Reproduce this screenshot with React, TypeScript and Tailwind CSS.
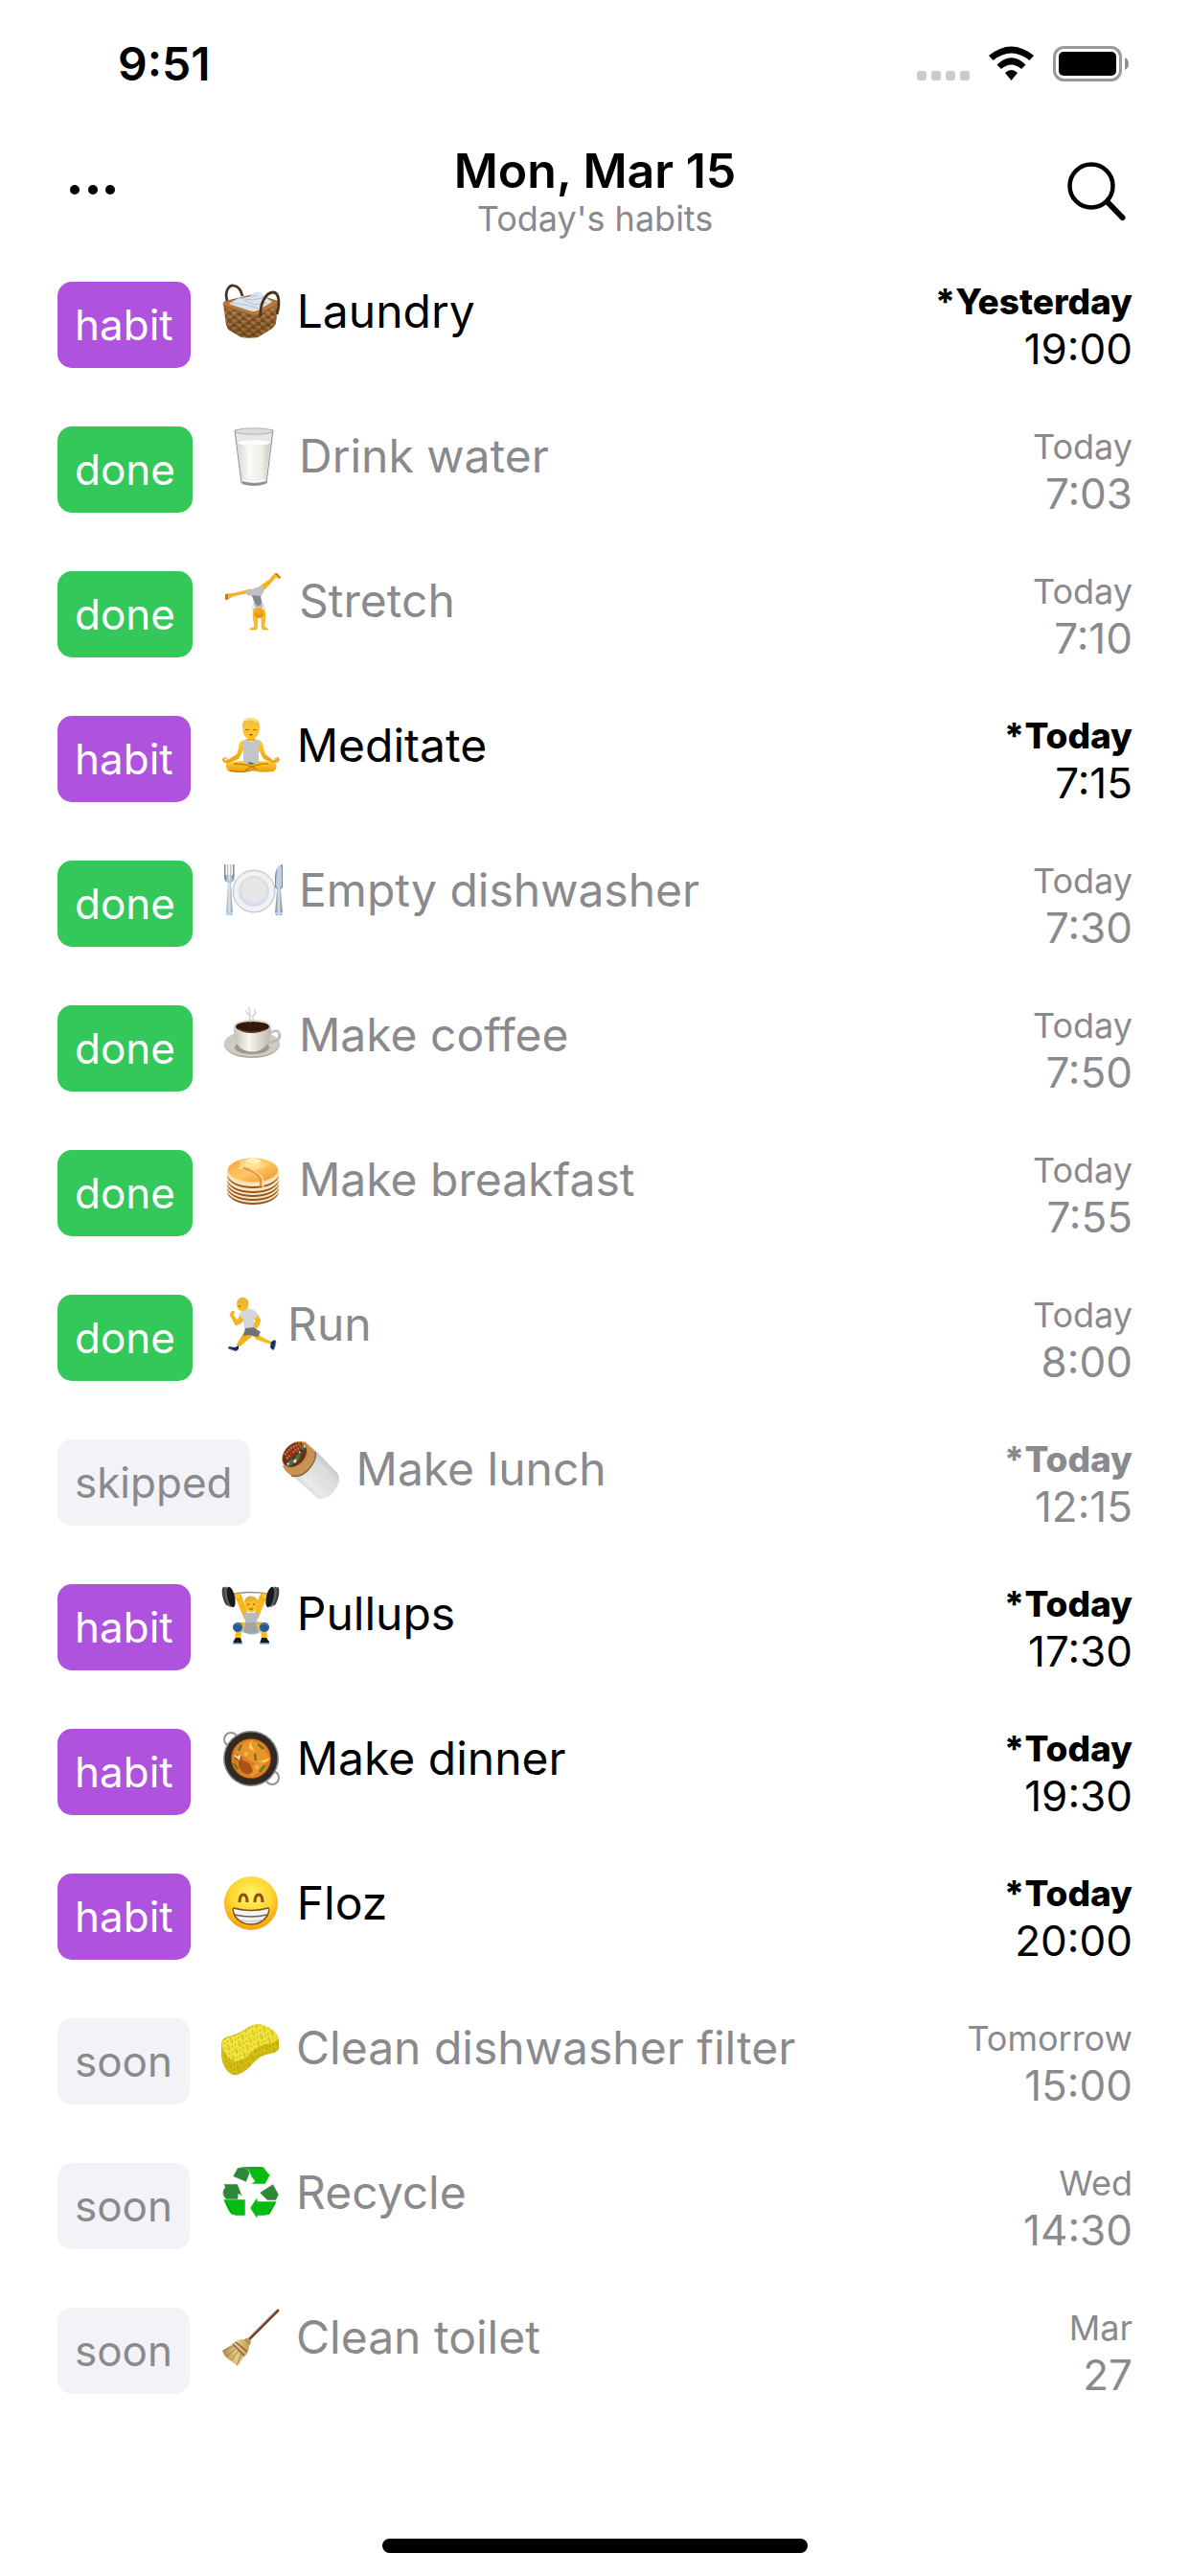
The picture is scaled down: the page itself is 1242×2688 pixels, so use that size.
import React from "react";

type Status = "habit" | "done" | "skipped" | "soon";

type Habit = {
  status: Status;
  icon: () => React.ReactElement;
  name: string;
  day: string;
  time: string;
  tight?: boolean;
};

function Emoji({ label, children }: { label: string; children: React.ReactNode }) {
  return (
    <svg role="img" aria-label={label} viewBox="0 0 60 60" className="size-[60px] shrink-0 overflow-visible">
      {children}
    </svg>
  );
}

const Basket = () => (
  <Emoji label="Laundry basket">
    <defs>
      <linearGradient id="basket" x1="0" y1="0" x2="0" y2="1">
        <stop offset="0" stopColor="#b98347" />
        <stop offset="1" stopColor="#7d5228" />
      </linearGradient>
      <pattern id="weave" width="10" height="8" patternUnits="userSpaceOnUse" patternTransform="skewY(6)">
        <rect width="5" height="4" fill="#5b3817" opacity=".55" />
        <rect x="5" y="4" width="5" height="4" fill="#5b3817" opacity=".55" />
        <path d="M5 1h5M0 5h5" stroke="#d19b58" strokeWidth="1" opacity=".7" />
      </pattern>
    </defs>
    <path d="M5 18C2 6 8 1 12 2c5 1 8 6 9 11" fill="none" stroke="#4a3420" strokeWidth="2.8" />
    <path d="M1 22 34 12 58 20 56 41Q55 45 50 48L37 56Q27 57 20 56L8 49Q5 47 4 43Z" fill="url(#basket)" />
    <path d="M2 25 36 34 58 23 56 41Q55 45 50 48L37 56Q27 57 20 56L8 49Q5 47 4 43Z" fill="url(#weave)" />
    <path d="M1 21Q1 19 5 18L34 11 57 18Q59 20 57 22L38 32Q35 34 31 33L4 24Q1 23 1 21Z" fill="#b57a3c" stroke="#80532a" strokeWidth=".8" />
    <path d="M7 21 17 15 27 14 34 9Q38 8 41 10L45 14 52 19 37 28Q33 30 28 28Z" fill="#dbe4ec" />
    <path d="M17 15 31 17 45 14M27 14 36 12M10 20 25 22 38 26M23 17 33 22 47 20" fill="none" stroke="#b3c0cd" strokeWidth="1" />
    <path d="M40 34C39 20 46 9 53 9 60 9 60 22 57 32" fill="none" stroke="#4a3420" strokeWidth="2.8" />
  </Emoji>
);

const Milk = () => (
  <Emoji label="Glass of milk">
    <defs>
      <linearGradient id="milk" x1="0" x2="1">
        <stop offset="0" stopColor="#d8d6cf" />
        <stop offset=".35" stopColor="#fbfaf6" />
        <stop offset=".75" stopColor="#efede6" />
        <stop offset="1" stopColor="#c9c7c0" />
      </linearGradient>
    </defs>
    <path d="M11 2 18 57Q31 62 44 57L51 2Z" fill="#e6e7e8" stroke="#8c8e90" strokeWidth="1" />
    <path d="M14 15 19 52Q31 56 43 52L48 15Z" fill="url(#milk)" />
    <ellipse cx="31" cy="15" rx="17" ry="2.8" fill="#fdfcf8" />
    <ellipse cx="31" cy="3" rx="20" ry="3.2" fill="#dadcdd" stroke="#a3a5a7" strokeWidth=".8" />
    <path d="M19 55Q31 59 44 55L43 58Q31 61 19 58Z" fill="#8f9191" />
    <path d="M20 54Q31 57 42 54" fill="none" stroke="#fff" strokeWidth="1.4" />
  </Emoji>
);

const Cartwheel = () => (
  <Emoji label="Person cartwheeling">
    <path d="M28 20 9 24 3 28 1 27 2 22 11 21 27 17Z" fill="#f7b416" stroke="#e3950d" strokeWidth=".5" />
    <path d="M37 14 47 7 53 0 55 1 59 5 57 6 54 4 48 11 40 19Z" fill="#f7b416" stroke="#e3950d" strokeWidth=".5" />
    <path d="M1 22 1 28 4 27 4 22ZM53 1 58 5 59 4 55 0Z" fill="#c97a10" />
    <path d="M31 34 30 45 32 56 27 58 27 59 34 59 35 44ZM38 36 39 45 39 56 40 59 46 59 45 58 42 56 43 43 41 35Z" fill="#f9bd20" stroke="#e3950d" strokeWidth=".5" />
    <path d="M22 19 34 15 39 13 42 18 38 25 41 34 42 38 38 38 36 35 33 38 29 37 31 31 29 24 24 23Z" fill="#bfc0c4" />
    <path d="M29 23 38 24 39 32 35 35 32 31Z" fill="#85868c" />
    <path d="M29 36 31 32 33 38ZM41 33 43 37 39 38Z" fill="#f3f3f5" stroke="#d5d5d9" strokeWidth=".5" />
    <circle cx="36" cy="41" r="5" fill="#f2a81a" />
    <path d="M31 41Q36 45 41 41 41 47 36 47 32 46 31 41Z" fill="#dd9411" />
  </Emoji>
);

const Lotus = () => (
  <Emoji label="Person in lotus position">
    <defs>
      <linearGradient id="skin" x1="0" y1="0" x2="0" y2="1">
        <stop offset="0" stopColor="#ffd02e" />
        <stop offset="1" stopColor="#eb9d11" />
      </linearGradient>
    </defs>
    <path d="M26 18H34V24H26Z" fill="#eaa41a" />
    <path d="M22 23Q17 25 17 32L15 38 4 45 1 42 0 44 5 48 17 43 23 32ZM38 23Q43 25 43 32L45 38 54 45 59 41 59 44 54 48 43 43 37 32Z" fill="url(#skin)" />
    <path d="M4 48Q18 43 30 46 43 43 56 48 58 53 53 56 42 58 30 55 17 58 7 56 3 53 4 48Z" fill="url(#skin)" />
    <path d="M12 48Q29 48 36 54M48 48Q36 47 24 55M8 55Q24 58 33 54" fill="none" stroke="#c77c0b" strokeWidth="1.3" />
    <path d="M22 24 25 22Q30 28 35 22L39 24 38 34V47Q30 50 22 47V34Z" fill="#c4c5c9" />
    <path d="M26 47Q30 45 34 48L30 49Z" fill="#606a74" />
    <ellipse cx="30" cy="12" rx="8.7" ry="10.5" fill="#ffc52a" />
    <path d="M21 12V6Q24-1 31 0 40 1 39 12L37 8Q29 9 25 6Z" fill="#f4be42" />
    <path d="M24 3Q30-1 36 4" fill="none" stroke="#ffe494" strokeWidth="2" />
    <path d="M24 12Q26 14 28 12M32 12Q34 14 36 12" fill="none" stroke="#945e12" strokeWidth="1" />
    <path d="M28 17H32Q30 20 28 17Z" fill="#8f3e17" />
    <circle cx="3" cy="44" r="2.3" fill="none" stroke="#e09812" />
    <circle cx="57" cy="44" r="2.3" fill="none" stroke="#e09812" />
  </Emoji>
);

const Plate = () => (
  <Emoji label="Fork and knife with plate">
    <defs>
      <linearGradient id="steel" x1="0" x2="1">
        <stop offset="0" stopColor="#707780" />
        <stop offset=".5" stopColor="#d9e5f1" />
        <stop offset="1" stopColor="#707780" />
      </linearGradient>
    </defs>
    <circle cx="31" cy="30" r="22" fill="#ececee" stroke="#aebfd3" strokeWidth="1" />
    <circle cx="31" cy="30" r="20" fill="#f2f2f3" />
    <circle cx="31" cy="30" r="15.5" fill="#e0e1e3" stroke="#d6d9dd" strokeWidth="1" />
    <path d="M17 35A15 15 0 0 0 45 35" fill="none" stroke="#c8dcf5" strokeWidth="1.6" />
    <circle cx="31" cy="29" r="12.5" fill="#e6e6e7" />
    <path d="M0 2H1.5V13H3V2H4.5V13H6V2H7.5V13H9V2H10.5V16Q10 20 7 21L9 54Q6 57 2 54L4 21Q0 20 0 16Z" fill="url(#steel)" />
    <path d="M0 16Q5 22 10 16L7 21H4Z" fill="#a9c8ed" />
    <path d="M61 2Q53 3 53 17V26L55 28 53 54Q57 57 61 54L59 28 61 26Z" fill="url(#steel)" />
    <path d="M60 4Q54 6 54 25H60Z" fill="#bdd0e4" />
    <path d="M2 53H9M53 53H61" stroke="#b8d5f7" strokeWidth="2" />
  </Emoji>
);

const Coffee = () => (
  <Emoji label="Hot coffee">
    <defs>
      <linearGradient id="cup" x1="0" x2="1">
        <stop offset="0" stopColor="#c3bfb7" />
        <stop offset=".4" stopColor="#f8f6f1" />
        <stop offset="1" stopColor="#bbb6ad" />
      </linearGradient>
    </defs>
    <ellipse cx="29" cy="39" rx="29" ry="14" fill="#aaa59c" />
    <ellipse cx="29" cy="38" rx="29" ry="13.5" fill="#cfcbc3" />
    <ellipse cx="29" cy="42" rx="18" ry="7" fill="#9d978c" />
    <path d="M47 27Q57 21 58 29 58 36 45 37" fill="none" stroke="#c0bbb2" strokeWidth="3" />
    <path d="M47 26Q57 20 59 28" fill="none" stroke="#efede7" strokeWidth="1" />
    <path d="M10 20Q10 39 19 44 29 49 39 44 49 38 49 20Z" fill="url(#cup)" />
    <ellipse cx="29.5" cy="20" rx="19.5" ry="7" fill="#dcd8d0" />
    <ellipse cx="29.5" cy="20.5" rx="17.5" ry="5.5" fill="#34190e" />
    <path d="M14 22Q29 29 45 22 39 27 29 27 19 27 14 22Z" fill="#6d3c20" />
    <path d="M28 16Q25 12 28 9 23 7 23 3M26 8Q28 4 25 0M31 15Q28 9 33 6L31 2" fill="none" stroke="#b5b5b5" strokeWidth="1.5" opacity=".6" />
  </Emoji>
);

const Pancakes = () => (
  <Emoji label="Pancakes">
    <defs>
      <linearGradient id="cake" x1="0" y1="0" x2="1" y2="1">
        <stop offset="0" stopColor="#eda23a" />
        <stop offset=".5" stopColor="#ffc762" />
        <stop offset="1" stopColor="#e8912e" />
      </linearGradient>
    </defs>
    {[40, 36, 32, 28, 23].map((y) => (
      <g key={y}>
        <ellipse cx="30" cy={y + 1} rx="27" ry="14" fill="#96551d" />
        <ellipse cx="30" cy={y - 1} rx="27.5" ry="14" fill="#f9e5c1" />
      </g>
    ))}
    <ellipse cx="30" cy="20" rx="27" ry="13.5" fill="#f9dfaf" />
    <ellipse cx="30" cy="19" rx="26" ry="12.5" fill="url(#cake)" />
    <path d="M16 10Q25 5 35 7L45 13Q37 20 30 18L40 25Q42 31 42 37 38 39 39 29L24 20 14 18Q18 15 16 10Z" fill="#ffd98e" opacity=".85" />
    <path d="M20 17Q32 20 38 28V36" fill="none" stroke="#e58d48" strokeWidth="2" />
    <path d="M22 9 29 6 39 9 37 15 31 18 21 14Z" fill="#ffe391" />
    <path d="M22 9 29 6 39 9 32 13Z" fill="#fff2bc" />
  </Emoji>
);

const Runner = () => (
  <Emoji label="Person running">
    <path d="M27 32 20 38 13 50 15 53 25 45 34 37Z" fill="#f6b016" />
    <path d="M32 35 39 42 49 47 49 50 34 45 27 38Z" fill="#f9bc1f" />
    <path d="M18 16 14 25 9 19 11 16 8 15 6 19 12 30 17 28 23 22ZM33 16 38 25 34 33 30 31 33 25 28 18Z" fill="#f8b719" stroke="#df930e" strokeWidth=".5" />
    <path d="M18 14 25 12Q33 13 35 20L31 24V34Q26 38 21 34L20 24 16 20Z" fill="#d5d6da" />
    <path d="M22 33 31 32 38 37 35 42 26 40 20 41Z" fill="#707176" />
    <path d="M31 31Q29 28 33 27L37 29 35 32Z" fill="#f8b719" />
    <ellipse cx="19" cy="9" rx="6" ry="6" fill="#fbbd20" />
    <path d="M13 6Q15 0 21 1 27 3 25 10L22 12 20 7 14 7Z" fill="#e9b437" />
    <path d="M15 10H17" stroke="#77440d" strokeWidth="1.2" />
    <path d="M5 52 11 53 15 51 15 55 12 57 4 54ZM49 47 53 45 54 47 53 53 51 56 48 53Z" fill="#172d62" />
    <path d="M4 54 13 57M54 47 52 55" stroke="#7186a8" strokeWidth=".8" />
  </Emoji>
);

const Burrito = () => (
  <Emoji label="Burrito">
    <defs>
      <linearGradient id="foil" x1="0" y1="1" x2="1" y2="0">
        <stop offset="0" stopColor="#b5b6b8" />
        <stop offset=".35" stopColor="#e9e9ea" />
        <stop offset=".65" stopColor="#d9dadb" />
        <stop offset="1" stopColor="#a4a5a7" />
      </linearGradient>
    </defs>
    <path d="M11 36 37 11 58 33Q62 39 58 47 51 60 41 60 37 60 34 56Z" fill="url(#foil)" />
    <path d="M1 26Q6 35 13 37 22 39 30 27 38 17 36 11L24 0Z" fill="#c99155" />
    <path d="M10 36Q22 38 30 27 37 18 35 11" fill="none" stroke="#8f6a41" strokeWidth="1.4" />
    <ellipse cx="14" cy="14" rx="16" ry="11.5" transform="rotate(-48 14 14)" fill="#c68a49" />
    <ellipse cx="13.5" cy="14" rx="14.5" ry="10.5" transform="rotate(-48 13.5 14)" fill="#652e1d" />
    <path d="M3 14 10 7 20 2M5 18 15 9 23 4" fill="none" stroke="#d76830" strokeWidth="3" strokeDasharray="2 1" />
    <path d="M6 21 11 18 13 22 9 26ZM15 14 20 12 18 20 14 18ZM19 5 24 5 22 10Z" fill="#3c7d30" />
    <path d="M12 20 15 18 16 21 13 23ZM17 11 19 10 20 13ZM5 23 8 22 7 26ZM23 3 25 6 23 7Z" fill="#d8dce5" />
    <circle cx="11" cy="14" r="2" fill="#9c2618" />
    <path d="M21 36 43 57M29 36 32 40 30 43M39 25 47 30 44 35M50 40 44 43" fill="none" stroke="#fff" opacity=".4" />
  </Emoji>
);

const Lifter = () => (
  <Emoji label="Person lifting weights">
    <path d="M8 9Q30 4 52 9" fill="none" stroke="#8c9095" strokeWidth="1.5" />
    <path d="M14 9 18 7 21 12 26 27 23 35 15 15ZM45 9 41 7 38 12 34 27 37 35 45 15Z" fill="#f8b81a" />
    <path d="M13 8 17 7 20 11 16 15 13 12ZM42 7 46 8 47 12 43 15 40 11Z" fill="#fbc52d" stroke="#d28b12" strokeWidth=".7" />
    <g transform="rotate(-13 7 11)">
      <ellipse cx="3.5" cy="10" rx="3" ry="10" fill="#3b3d42" />
      <ellipse cx="6" cy="11" rx="3.2" ry="11" fill="#5a5d63" />
      <ellipse cx="9" cy="12" rx="3.8" ry="11" fill="#17191c" />
    </g>
    <g transform="rotate(13 52 11)">
      <ellipse cx="55.5" cy="10" rx="3" ry="10" fill="#3b3d42" />
      <ellipse cx="53" cy="11" rx="3.2" ry="11" fill="#5a5d63" />
      <ellipse cx="50" cy="12" rx="3.8" ry="11" fill="#17191c" />
    </g>
    <path d="M15 42H21L19 55H13ZM40 42H46L47 55H41Z" fill="#f9ba1c" />
    <path d="M22 26 27 28 33 28 38 26 36 37 43 38 44 46 36 50Q30 52 24 49L17 47 17 38 24 38Z" fill="#b9babe" />
    <path d="M25 38 22 48Q30 51 37 48L35 38Z" fill="#a3a4a8" />
    <path d="M13 40Q18 36 24 39L23 44ZM47 40Q42 36 36 39L37 44Z" fill="#f8b81a" />
    <ellipse cx="30" cy="19" rx="6.5" ry="8.5" fill="#fbbf26" />
    <path d="M23 17Q24 9 32 11 38 12 37 19L34 15Q28 16 23 17Z" fill="#e5ae37" />
    <path d="M26 19H28M32 19H34M28 24H32" stroke="#894916" strokeWidth="1.2" />
    <circle cx="16" cy="43" r="5" fill="#235a97" />
    <circle cx="44" cy="43" r="5" fill="#235a97" />
    <path d="M13 40 17 39 20 42M41 40 45 39 48 42" fill="none" stroke="#568dc2" />
    <path d="M14 54 19 54 21 60H11L12 57ZM41 54H46L49 58V60H39Z" fill="#17191e" />
    <path d="M11 60H21M39 60H49" stroke="#6eb5ec" strokeWidth="1.4" />
  </Emoji>
);

const Dinner = () => (
  <Emoji label="Shallow pan of food">
    <circle cx="9" cy="9" r="7" fill="none" stroke="#96938d" strokeWidth="2" />
    <circle cx="52" cy="49" r="7" fill="none" stroke="#96938d" strokeWidth="2" />
    <circle cx="30" cy="29" r="29" fill="#8e8b88" />
    <circle cx="30" cy="29" r="27.5" fill="#302a27" />
    <circle cx="30" cy="29" r="21.5" fill="#5f2f15" />
    <circle cx="30" cy="29" r="20.5" fill="#df7e20" />
    <path d="M13 22 26 10 39 13 48 26 42 40 31 48 22 43 35 34Z" fill="#eda034" opacity=".7" />
    <path d="M13 27 15 25 18 28 20 26 21 31Q30 32 32 42 28 49 20 42 16 37 17 31L13 30Z" fill="#aa5219" />
    <path d="M12 26Q14 24 16 27 18 24 19 26L18 31Z" fill="#f3dfc3" />
    <path d="M31 10Q24 19 34 21 28 15 31 10ZM38 32Q48 35 49 28 45 31 38 32Z" fill="#ffe785" stroke="#f3b829" strokeWidth=".8" />
    <path d="M20 15 17 21M37 14 43 19M12 34 16 40M34 24 35 31M44 36 39 43" stroke="#607c21" strokeWidth="2.4" />
    <circle cx="25" cy="24" r="2" fill="#f6b74e" />
    <circle cx="36" cy="38" r="2" fill="#f6b74e" />
  </Emoji>
);

const Grin = () => (
  <Emoji label="Beaming face">
    <defs>
      <radialGradient id="face" cx=".5" cy=".35" r=".65">
        <stop offset="0" stopColor="#fff46a" />
        <stop offset=".6" stopColor="#ffd52f" />
        <stop offset="1" stopColor="#f59e0d" />
      </radialGradient>
    </defs>
    <circle cx="30" cy="29" r="28" fill="url(#face)" />
    <path d="M18 28Q18 20 22 20T26 28M34 28Q34 20 38 20T42 28" fill="none" stroke="#8a4e0d" strokeWidth="3" />
    <path d="M12 34Q30 39 48 34 50 35 47 42 41 51 30 51 19 51 13 42 10 35 12 34Z" fill="#f2f3f5" stroke="#875019" strokeWidth="1.5" />
    <path d="M13 41Q30 45 47 41" fill="none" stroke="#7a5d44" strokeWidth="1.5" />
    <path d="M17 46Q30 50 43 46" fill="none" stroke="#b8bcc3" strokeWidth="1" />
  </Emoji>
);

const Sponge = () => (
  <Emoji label="Sponge">
    <defs>
      <pattern id="pores" width="9" height="8" patternUnits="userSpaceOnUse" patternTransform="rotate(23)">
        <path d="M1 1h1M5 2h1M3 5h1M7 6h1M8 0h1M0 7h1" stroke="#8d7b0c" strokeWidth="1.2" />
      </pattern>
    </defs>
    <path d="M0 24Q0 18 14 15 23 12 28 7 35 3 43 5 58 10 60 20V30Q58 34 51 35 42 36 34 44 26 54 17 57 10 59 4 50 0 42 0 35Z" fill="#d4bd13" />
    <path d="M0 25Q1 19 14 16 23 13 28 8 35 3 43 5 58 9 59 20 55 24 46 25 38 27 31 34 24 42 14 43 3 39 0 25Z" fill="#f2e33b" />
    <path d="M0 24Q0 18 14 15 23 12 28 7 35 3 43 5 58 10 60 20V30Q58 34 51 35 42 36 34 44 26 54 17 57 10 59 4 50 0 42 0 35Z" fill="url(#pores)" />
  </Emoji>
);

const Recycle = () => (
  <Emoji label="Recycling symbol">
    <g stroke="#fff" strokeWidth=".5">
      <path d="M17 3H32L26 18 12 12Z" fill="#2f8738" />
      <path d="M19 2H43Q45 2 46 5L50 10 52 8 46 20H31L35 17Q31 13 29 7 27 2 19 2Z" fill="#06bb12" />
      <path d="M2 20H17L22 33 18 30 17 37H6Q-2 30 4 23Z" fill="#2f8738" />
      <path d="M2 36H25V53H15Q9 52 7 47Z" fill="#06bb12" />
      <path d="M40 29 54 20 60 31 57 37H48L45 34Z" fill="#2f8738" />
      <path d="M37 34 38 38H58L52 49Q50 53 44 53H38L37 56 30 45Z" fill="#06bb12" />
    </g>
    <path d="M20 3H42M4 38 12 52M56 40 49 52" fill="none" stroke="#078b14" />
  </Emoji>
);

const Broom = () => (
  <Emoji label="Broom">
    <defs>
      <linearGradient id="straw" x1="0" x2="1">
        <stop offset="0" stopColor="#a98743" />
        <stop offset=".5" stopColor="#e6cd8a" />
        <stop offset="1" stopColor="#b59752" />
      </linearGradient>
    </defs>
    <path d="M27 33 59 1" stroke="#6f3f29" strokeWidth="3" strokeLinecap="round" />
    <path d="M28 31 58 1" stroke="#9b6547" strokeWidth=".8" />
    <path d="M26 30Q29 29 31 33L29 38Q28 47 23 50L17 59 4 49 1 43 12 36Q15 31 24 31Z" fill="url(#straw)" />
    <path d="M12 36 24 48M15 34 27 44" stroke="#945732" strokeWidth="1.5" />
    <path d="M13 38 2 43M15 41 5 49M18 43 10 53M21 46 16 58" stroke="#927640" strokeWidth=".8" />
    <path d="M25 31 30 36" stroke="#b28e4b" strokeWidth="2" />
  </Emoji>
);

const habits: Habit[] = [
  { status: "habit", icon: Basket, name: "Laundry", day: "*Yesterday", time: "19:00" },
  { status: "done", icon: Milk, name: "Drink water", day: "Today", time: "7:03" },
  { status: "done", icon: Cartwheel, name: "Stretch", day: "Today", time: "7:10" },
  { status: "habit", icon: Lotus, name: "Meditate", day: "*Today", time: "7:15" },
  { status: "done", icon: Plate, name: "Empty dishwasher", day: "Today", time: "7:30" },
  { status: "done", icon: Coffee, name: "Make coffee", day: "Today", time: "7:50" },
  { status: "done", icon: Pancakes, name: "Make breakfast", day: "Today", time: "7:55" },
  { status: "done", icon: Runner, name: "Run", day: "Today", time: "8:00", tight: true },
  { status: "skipped", icon: Burrito, name: "Make lunch", day: "*Today", time: "12:15" },
  { status: "habit", icon: Lifter, name: "Pullups", day: "*Today", time: "17:30" },
  { status: "habit", icon: Dinner, name: "Make dinner", day: "*Today", time: "19:30" },
  { status: "habit", icon: Grin, name: "Floz", day: "*Today", time: "20:00" },
  { status: "soon", icon: Sponge, name: "Clean dishwasher filter", day: "Tomorrow", time: "15:00" },
  { status: "soon", icon: Recycle, name: "Recycle", day: "Wed", time: "14:30" },
  { status: "soon", icon: Broom, name: "Clean toilet", day: "Mar", time: "27" },
];

const badgeStyles: Record<Status, string> = {
  habit: "bg-[#af52de] text-white",
  done: "bg-[#34c759] text-white",
  skipped: "bg-[#f2f2f7] text-[#8a8a8e]",
  soon: "bg-[#f2f2f7] text-[#8a8a8e]",
};

function HabitRow({ habit }: { habit: Habit }) {
  const Icon = habit.icon;
  return (
    <li className={`flex min-h-[151px] items-start ${habit.status === "habit" ? "text-black" : "text-[#8a8a8e]"}`}>
      <button type="button" className={`h-[90px] shrink-0 rounded-[15px] px-[18px] text-[44px] ${badgeStyles[habit.status]}`}>
        {habit.status}
      </button>
      <div className={`ml-[33px] flex min-w-0 flex-1 items-end ${habit.tight ? "gap-[6px]" : "gap-[18px]"}`}>
        <Icon />
        <span className="text-[48px] leading-[62px]">{habit.name}</span>
      </div>
      <div className="shrink-0 text-right">
        <div className={`leading-[42px] ${habit.day.startsWith("*") ? "text-[37px] font-extrabold" : "text-[36px]"}`}>{habit.day}</div>
        <div className="text-[44px] leading-[56px]">{habit.time}</div>
      </div>
    </li>
  );
}

function StatusBar() {
  return (
    <div className="flex h-[134px] items-center justify-between pr-[64px] pl-[123px]">
      <span className="text-[48px] leading-none font-semibold">9:51</span>
      <svg role="img" aria-label="Status" viewBox="0 0 222 40" className="h-[40px] w-[222px]">
        <g fill="#cbcbcb">
          <rect x="1" y="27" width="10" height="10" rx="3" />
          <rect x="16" y="27" width="10" height="10" rx="3" />
          <rect x="31" y="27" width="10" height="10" rx="3" />
          <rect x="46" y="27" width="10" height="10" rx="3" />
        </g>
        <path d="M76 11Q99.500-8 123 11L118.500 16Q99.500 1 80.500 16Z" />
        <path d="M84.500 20.500Q99.500 6 114.500 20.500L110 25Q99.500 16 89 25Z" />
        <path d="M93 29Q99.500 23 106 29L99.500 37Z" />
        <rect x="144.500" y="2.500" width="69" height="34" rx="10" fill="none" stroke="#999" strokeWidth="3" />
        <rect x="149" y="7" width="60" height="25" rx="5" />
        <path d="M218 13Q222 15 222 19.500T218 26Z" fill="#8f8f8f" />
      </svg>
    </div>
  );
}

export default function App() {
  return (
    <div className="flex min-h-screen flex-col bg-white font-['Inter',sans-serif] text-black">
      <StatusBar />
      <header className="flex h-[160px] items-start justify-between px-[60px]">
        <button type="button" aria-label="More options" className="mt-[34px] flex size-[68px] items-center">
          <svg viewBox="0 0 60 60" className="size-[60px]">
            <circle cx="18" cy="26" r="5" />
            <circle cx="37" cy="26" r="5" />
            <circle cx="55" cy="26" r="5" />
          </svg>
        </button>
        <div className="mt-[14px] text-center">
          <h1 className="text-[50px] leading-[60px] font-semibold">Mon, Mar 15</h1>
          <p className="text-[36px] leading-[40px] text-[#8a8a8e]">Today's habits</p>
        </div>
        <button type="button" aria-label="Search" className="mt-[32px] size-[68px]">
          <svg viewBox="0 0 64 64" className="size-[64px]" fill="none" stroke="#000" strokeLinecap="round">
            <circle cx="25" cy="26" r="22.500" strokeWidth="4.500" />
            <path d="M42 43 57.500 59" strokeWidth="6" />
          </svg>
        </button>
      </header>
      <main className="flex-1 px-[60px]">
        <ul>
          {habits.map((habit) => (
            <HabitRow key={habit.name} habit={habit} />
          ))}
        </ul>
      </main>
      <footer className="flex justify-center pb-[24px]">
        <div className="h-[15px] w-[444px] rounded-full bg-black" />
      </footer>
    </div>
  );
}
